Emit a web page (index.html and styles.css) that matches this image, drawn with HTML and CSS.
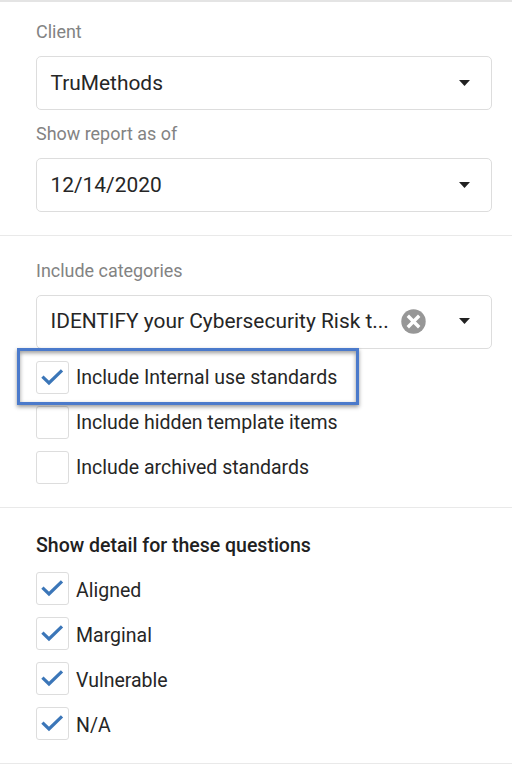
FILE: index.html
```html
<!DOCTYPE html>
<html lang="en">
<head>
<meta charset="utf-8">
<title>Report options</title>
<link rel="stylesheet" href="styles.css">
</head>
<body>
<main class="panel">
  <section class="group general">
    <div class="label">Client</div>
    <div class="select"><span class="value">TruMethods</span><i class="caret"></i></div>
    <div class="label second">Show report as of</div>
    <div class="select"><span class="value">12/14/2020</span><i class="caret"></i></div>
  </section>
  <section class="group categories">
    <div class="label">Include categories</div>
    <div class="select filled"><span class="value">IDENTIFY your Cybersecurity Risk t...</span>
      <svg class="clear" viewBox="0 0 25 25"><circle cx="12.5" cy="12.5" r="12.2" fill="#979797"/><path d="M6.8 6.8l11.4 11.4M18.2 6.8L6.8 18.2" stroke="#fff" stroke-width="3.4"/></svg>
      <i class="caret"></i></div>
    <div class="checks">
      <div class="check marked"><span class="box"><svg viewBox="0 0 31 31"><path d="M5.4 14.6l6.6 6.4L25 8.3"/></svg></span><span class="name">Include Internal use standards</span></div>
      <div class="check"><span class="box"></span><span class="name">Include hidden template items</span></div>
      <div class="check"><span class="box"></span><span class="name">Include archived standards</span></div>
    </div>
  </section>
  <section class="group detail">
    <h2 class="title">Show detail for these questions</h2>
    <div class="checks">
      <div class="check"><span class="box"><svg viewBox="0 0 31 31"><path d="M5.4 14.6l6.6 6.4L25 8.3"/></svg></span><span class="name">Aligned</span></div>
      <div class="check"><span class="box"><svg viewBox="0 0 31 31"><path d="M5.4 14.6l6.6 6.4L25 8.3"/></svg></span><span class="name">Marginal</span></div>
      <div class="check"><span class="box"><svg viewBox="0 0 31 31"><path d="M5.4 14.6l6.6 6.4L25 8.3"/></svg></span><span class="name">Vulnerable</span></div>
      <div class="check"><span class="box"><svg viewBox="0 0 31 31"><path d="M5.4 14.6l6.6 6.4L25 8.3"/></svg></span><span class="name">N/A</span></div>
    </div>
  </section>
</main>
</body>
</html>
```
FILE: styles.css
```css
*, *::before { box-sizing: border-box; }
body { margin: 0; background: #fff; color: #262626; font-family: Roboto, sans-serif; }
.panel { height: 765px; border-top: 2px solid #e4e4e4; overflow: hidden; }
.group { padding: 0 20px 0 36px; border-bottom: 1px solid #e9e9e9; }
.general { height: 234px; padding-top: 18px; }
.categories { height: 272px; padding-top: 23px; }
.detail { height: 256px; padding-top: 26px; }
.label { height: 24px; line-height: 24px; font-size: 17.95px; color: #838383; margin-bottom: 12px; white-space: nowrap; }
.second { margin-top: 12px; }
.select { height: 54px; display: flex; align-items: center; border: 1px solid #ddd; border-radius: 5px; padding: 0 21px 0 13.5px; }
.filled { padding-bottom: 2px; }
.value { flex: 1; font-size: 20.9px; white-space: nowrap; }
.caret { width: 11px; height: 6px; background: #212121; clip-path: polygon(0 0, 100% 0, 50% 100%); }
.clear { width: 25px; height: 25px; margin-right: 33px; }
.checks { display: flex; flex-direction: column; gap: 12px; margin-top: 12px; }
.check { height: 33px; display: flex; align-items: center; gap: 7px; }
.box { width: 33px; height: 33px; border: 1px solid #ddd; border-radius: 3px; }
.box svg { display: block; width: 31px; height: 31px; fill: none; stroke: #3b76b8; stroke-width: 3.2; }
.name { font-size: 19.5px; white-space: nowrap; }
.marked { position: relative; z-index: 1; }
.marked::before { content: ""; position: absolute; left: -19px; top: -13px; width: 342px; height: 57px; border: 3px solid #4b7acb; box-shadow: 0 2px 4px #0006, inset 0 2px 4px #0006; }
.title { margin: 0; height: 24px; line-height: 24px; font-size: 19.5px; font-weight: 500; color: #212121; white-space: nowrap; }
.detail .checks { margin-top: 14px; }
.detail .name { padding-top: 4px; }
```
